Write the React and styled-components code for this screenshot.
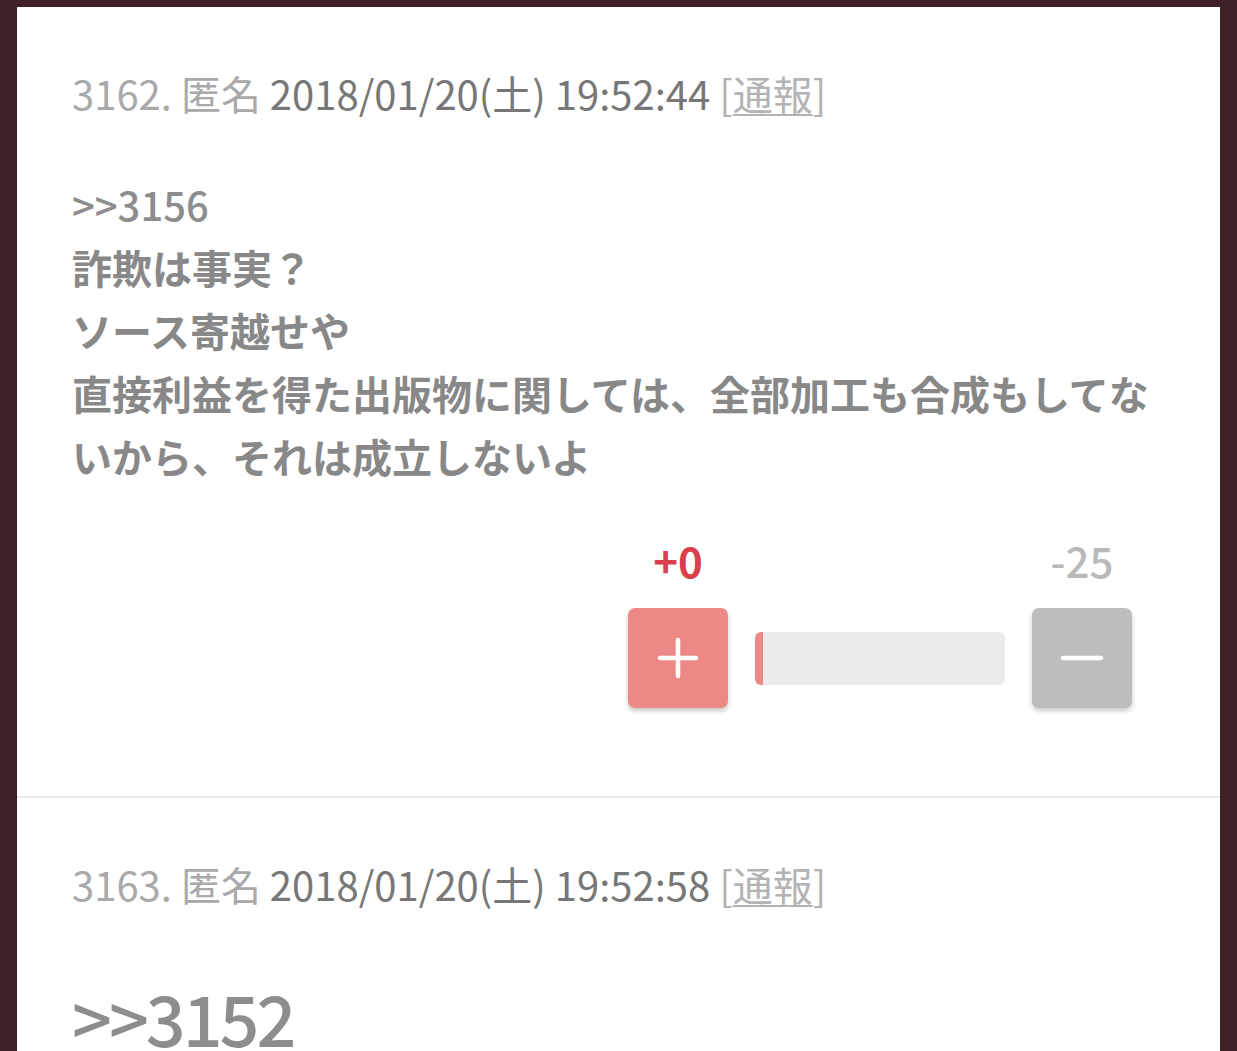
import React from "react";
import styled, { createGlobalStyle } from "styled-components";

const GlobalStyle = createGlobalStyle`
  html, body {
    margin: 0;
    padding: 0;
    background: #3f2125;
  }
  body {
    font-family: "Noto Sans CJK JP", "Noto Sans", sans-serif;
  }
`;

const Page = styled.div`
  padding: 7px 17px 0;
  height: 1051px;
  box-sizing: border-box;
  overflow: hidden;
`;

const Card = styled.div`
  background: #ffffff;
  min-height: 100%;
`;

const Post = styled.div`
  padding: 58px 40px 88px 55px;
  border-bottom: ${(p) => (p.last ? "none" : "2px solid #e9e9e9")};
`;

const Header = styled.div`
  font-size: 40px;
  line-height: 56px;
  color: #a9a9a9;
  font-weight: 400;
  white-space: nowrap;
`;

const Date = styled.span`
  color: #777777;
`;

const Report = styled.span`
  color: #b3b3b3;
  & u {
    text-decoration-thickness: 2px;
    text-underline-offset: 4px;
  }
`;

const Body = styled.div`
  margin-top: ${(p) => (p.big ? "65px" : "52px")};
  font-size: ${(p) => (p.big ? "70px" : "40px")};
  line-height: ${(p) => (p.big ? "80px" : "63px")};
  font-weight: 700;
  color: #888888;
`;

const Anchor = styled.div`
  color: #8d8d8d;
  font-weight: 500;
  letter-spacing: ${(p) => (p.big ? "-3px" : "0")};
`;

const Vote = styled.div`
  margin-top: 49px;
  padding-right: 48px;
  display: flex;
  justify-content: flex-end;
`;

const VoteGrid = styled.div`
  display: grid;
  grid-template-columns: 100px 250px 100px;
  column-gap: 27px;
  row-gap: 25px;
  align-items: center;
`;

const Count = styled.div`
  grid-column: ${(p) => p.col};
  text-align: center;
  font-size: 42px;
  line-height: 46px;
  font-weight: ${(p) => p.weight};
  color: ${(p) => p.color};
`;

const VoteButton = styled.button`
  width: 100px;
  height: 100px;
  border: none;
  border-radius: 7px;
  background: ${(p) => p.bg};
  box-shadow: 0 3px 5px rgba(0, 0, 0, 0.22);
  display: flex;
  align-items: center;
  justify-content: center;
  padding: 0;
`;

const Bar = styled.div`
  height: 53px;
  border-radius: 6px;
  background: #ebebeb;
  overflow: hidden;
  display: flex;
`;

const BarFill = styled.div`
  background: #ec8986;
  height: 100%;
`;

const PostHeader = ({ no, date }) => (
  <Header>
    {no}. 匿名 <Date>{date}</Date>{" "}
    <Report>
      [<u>通報</u>]
    </Report>
  </Header>
);

export default function App() {
  const plus = 0;
  const minus = 25;
  const ratio = plus + minus === 0 ? 0.5 : plus / (plus + minus);
  return (
    <>
      <GlobalStyle />
      <Page>
        <Card>
          <Post>
            <PostHeader no="3162" date="2018/01/20(土) 19:52:44" />
            <Body>
              <Anchor>&gt;&gt;3156</Anchor>
              詐欺は事実？
              <br />
              ソース寄越せや
              <br />
              直接利益を得た出版物に関しては、全部加工も合成もしてないから、それは成立しないよ
            </Body>
            <Vote>
              <VoteGrid>
                <Count col={1} color="#d9404c" weight={700}>
                  +{plus}
                </Count>
                <Count col={3} color="#b9b9b9" weight={500}>
                  -{minus}
                </Count>
                <VoteButton bg="#ec8986">
                  <svg width="44" height="44" viewBox="0 0 44 44">
                    <path d="M22 4v36M4 22h36" stroke="#fff" strokeWidth="4.5" strokeLinecap="round" />
                  </svg>
                </VoteButton>
                <Bar>
                  <BarFill style={{ width: `${Math.max(ratio * 100, 3)}%` }} />
                </Bar>
                <VoteButton bg="#bdbdbd">
                  <svg width="44" height="44" viewBox="0 0 44 44">
                    <path d="M3 22h38" stroke="#fff" strokeWidth="4.5" strokeLinecap="round" />
                  </svg>
                </VoteButton>
              </VoteGrid>
            </Vote>
          </Post>
          <Post last>
            <PostHeader no="3163" date="2018/01/20(土) 19:52:58" />
            <Body big>
              <Anchor big>&gt;&gt;3152</Anchor>
            </Body>
          </Post>
        </Card>
      </Page>
    </>
  );
}
